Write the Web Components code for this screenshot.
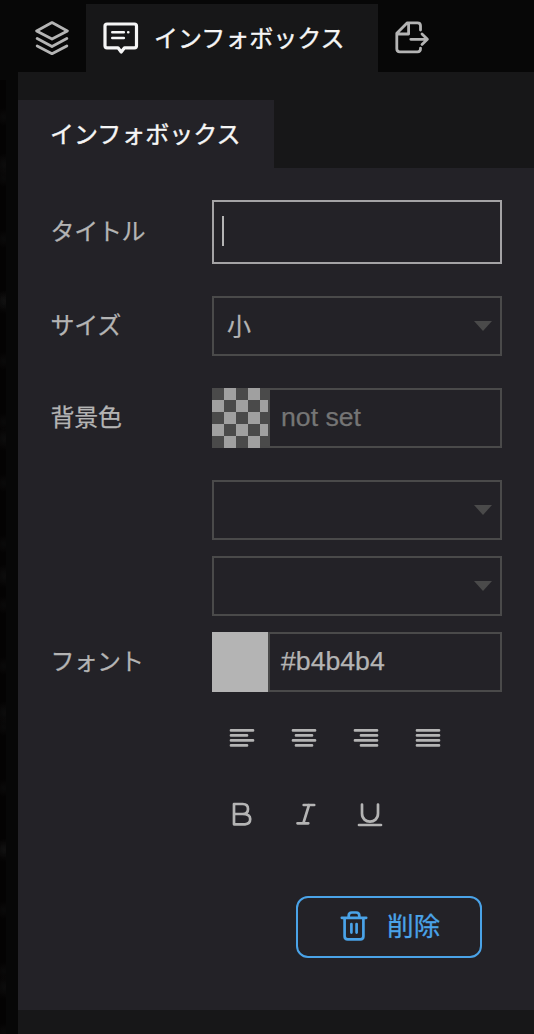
<!DOCTYPE html>
<html lang="ja">
<head>
<meta charset="utf-8">
<title>インフォボックス</title>
<style>
html,body{margin:0;height:100%;background:#070707;overflow:hidden}
body{font-family:"Liberation Sans","Noto Sans CJK JP",sans-serif;font-size:24px;color:#b4b4b4;-webkit-text-stroke:.25px currentColor}
</style>
</head>
<body>
<info-editor></info-editor>
<script>
const icons = {
  layers:[34,34,'<path d="M17 1.6 32.4 9.9 17 18 1.6 9.9ZM2.2 17.5 17 25.5 31.8 17.5M2.2 24.9 17 32.7 31.8 24.9" stroke-width="2.8"/>'],
  info:[36,32,'<path d="M4 2H31.5Q33.5 2 33.5 4V23.8Q33.5 25.8 31.5 25.8H21.5L18.2 30 15 25.8H4Q2 25.8 2 23.8V4Q2 2 4 2Z" stroke-width="3.2"/><path d="M9.3 10.2H20.8M9.3 16H20.8M25.2 10.2H25.3" stroke-width="2.6"/>'],
  exporter:[36,34,'<path d="M25.5 9V4.8Q25.5 1.8 22.5 1.8H12.3L1.8 12.3V27.8Q1.8 30.8 4.8 30.8H22.5Q25.5 30.8 25.5 27.8V27.2M13.6 1.8V13H1.8M15.8 18.3H32M27 13 32.4 18.3 27 23.4" stroke-width="2.8"/>'],
  left:[28,20,'<path d="M3 2.4H25M3 7.4H19M3 12.4H25M3 17.4H19"/>'],
  center:[28,20,'<path d="M3 2.4H25M6 7.4H22M3 12.4H25M6 17.4H22"/>'],
  right:[28,20,'<path d="M3 2.4H25M9 7.4H25M3 12.4H25M9 17.4H25"/>'],
  justify:[28,20,'<path d="M3 2.4H25M3 7.4H25M3 12.4H25M3 17.4H25"/>'],
  bold:[28,26,'<path d="M6 2H14.7Q20 2 20 7T14.7 12H6M14.7 12Q22.2 12 22.2 17T17 22.3H6V2"/>'],
  italic:[28,26,'<path d="M11.7 3H22.2M5.5 21.3H16.3M17 3 11.3 21.3"/>'],
  underline:[28,26,'<path d="M6 2.6V11.6C6 22.3 22 22.3 22 11.6V2.6M3 23H25"/>'],
  trash:[28,32,'<path d="M1.8 7.8H26.2M4.6 8V26.3Q4.6 29.4 7.7 29.4H20.3Q23.4 29.4 23.4 26.3V8M8.7 7.8V5.7Q8.7 2.5 11.8 2.5H16.2Q19.3 2.5 19.3 5.7V7.8M11.4 14V22.6M16.6 14V22.6" stroke-width="2.7"/>']
};
function define(name, markup){
  customElements.define(name, class extends HTMLElement{
    constructor(){
      super();
      this.attachShadow({mode:'open'}).innerHTML = markup;
    }
  });
}
customElements.define('ui-icon', class extends HTMLElement{
  connectedCallback(){
    const [w,h,body] = icons[this.getAttribute('name')];
    this.attachShadow({mode:'open'}).innerHTML = `<style>:host{display:block;flex:none;width:${w}px;height:${h}px}svg{display:block}</style><svg width="${w}" height="${h}" viewBox="0 0 ${w} ${h}" fill="none" stroke="currentColor" stroke-width="2.7" stroke-linecap="round" stroke-linejoin="round">${body}</svg>`;
  }
});
define('tool-tab', `<style>
  :host{display:flex;box-sizing:border-box;height:68px;align-items:center;color:#b4b4b4;padding-left:17px;line-height:32px;white-space:nowrap}
  :host([active]){width:292px;background:#171718;color:#f6f6f6;gap:15px;-webkit-text-stroke-width:.4px}
  ::slotted(span){padding-top:2px}
</style><slot></slot>`);
define('field-row', `<style>
  :host{display:grid;grid-template-columns:162px 290px;align-items:center}
  .label{line-height:30px;padding-left:.5px;letter-spacing:-.3px}
</style><div class="label"><slot name="label"></slot></div><slot></slot>`);
define('text-box', `<style>
  :host{display:flex;align-items:center;box-sizing:border-box;height:64px;border:2px solid #a4a3a5;padding-left:8px}
  i{width:2px;height:30px;background:#b4b4b4;margin-top:-2px}
</style><i></i>`);
define('select-box', `<style>
  :host{display:flex;align-items:center;justify-content:space-between;box-sizing:border-box;height:60px;border:2px solid #4a4a4a;padding:0 8px 0 13px}
  svg{display:block}
  span{padding-bottom:4px}
</style><span><slot></slot></span><svg width="18" height="10"><path d="M0 0H18L9 10Z" fill="#4a4a4a"/></svg>`);
define('color-box', `<style>
  :host{display:flex;height:60px}
  .swatch{width:56px;height:60px;background:#b4b4b4}
  :host([unset]) .swatch{background:repeating-conic-gradient(#a0a0a0 0 25%,#4a4a4a 0 50%) 0 0/24px 24px}
  .value{flex:1;box-sizing:border-box;border:2px solid #4a4a4a;padding-left:11px;line-height:54px;font-size:26.667px}
  :host([unset]) .value{color:#757575}
</style><div class="swatch"></div><div class="value"><slot></slot></div>`);
define('icon-row', `<style>:host{display:flex;gap:var(--gap,34px);padding-left:16px}</style><slot></slot>`);
define('outline-button', `<style>
  :host{display:flex;align-items:center;gap:19px;box-sizing:border-box;width:186px;height:62px;border:2px solid #4aa3e8;border-radius:12px;color:#4aa3e8;padding:0 0 2px 42px;font-size:26.667px}
  ::slotted(span){padding-bottom:3px}
</style><slot></slot>`);
define('panel-tab', `<style>:host{display:block;box-sizing:border-box;width:256px;height:68px;padding:1px 0 0 32px;background:#232227;color:#f6f6f6;-webkit-text-stroke-width:.4px;line-height:68px}</style><slot></slot>`);
define('info-editor', `<style>
  :host{display:grid;grid-template-columns:6px 1fr;column-gap:12px;grid-template-rows:72px 962px;width:534px;height:1034px}
  nav{grid-column:2;padding-top:4px;display:flex}
  .map{grid-row:2;margin-top:8px;background:radial-gradient(circle at 4px 37px,#25242433,transparent 9px) 0 0/6px 61px,radial-gradient(circle at 5px 85px,#3333,transparent 12px) 0 0/6px 137px,#040303}
  main{grid-column:2;background:#171718;padding-top:28px}
  section{background:#232227;height:842px;box-sizing:border-box;padding:32px 32px 0}
  field-row+field-row{margin-top:32px}
  .extra{margin:32px 0 16px 162px;display:grid;gap:16px}
  .tools{margin-left:162px;display:grid}
  .tools icon-row:first-child{margin-top:36px}
  .tools icon-row:last-child{margin-top:54px;--gap:36px}
  outline-button{margin:68px 20px 0 auto}
</style>
<nav>
  <tool-tab style="width:68px"><ui-icon name="layers"></ui-icon></tool-tab>
  <tool-tab active><ui-icon name="info"></ui-icon><span>インフォボックス</span></tool-tab>
  <tool-tab><ui-icon name="exporter"></ui-icon></tool-tab>
</nav>
<div class="map"></div>
<main>
  <panel-tab>インフォボックス</panel-tab>
  <section>
    <field-row><span slot="label">タイトル</span><text-box></text-box></field-row>
    <field-row><span slot="label">サイズ</span><select-box>小</select-box></field-row>
    <field-row><span slot="label">背景色</span><color-box unset>not set</color-box></field-row>
    <div class="extra"><select-box></select-box><select-box></select-box></div>
    <field-row><span slot="label" style="letter-spacing:-.8px">フォント</span><color-box>#b4b4b4</color-box></field-row>
    <div class="tools">
      <icon-row><ui-icon name="left"></ui-icon><ui-icon name="center"></ui-icon><ui-icon name="right"></ui-icon><ui-icon name="justify"></ui-icon></icon-row>
      <icon-row><ui-icon name="bold"></ui-icon><ui-icon name="italic"></ui-icon><ui-icon name="underline"></ui-icon></icon-row>
    </div>
    <outline-button><ui-icon name="trash"></ui-icon><span>削除</span></outline-button>
  </section>
</main>`);
</script>
</body>
</html>
